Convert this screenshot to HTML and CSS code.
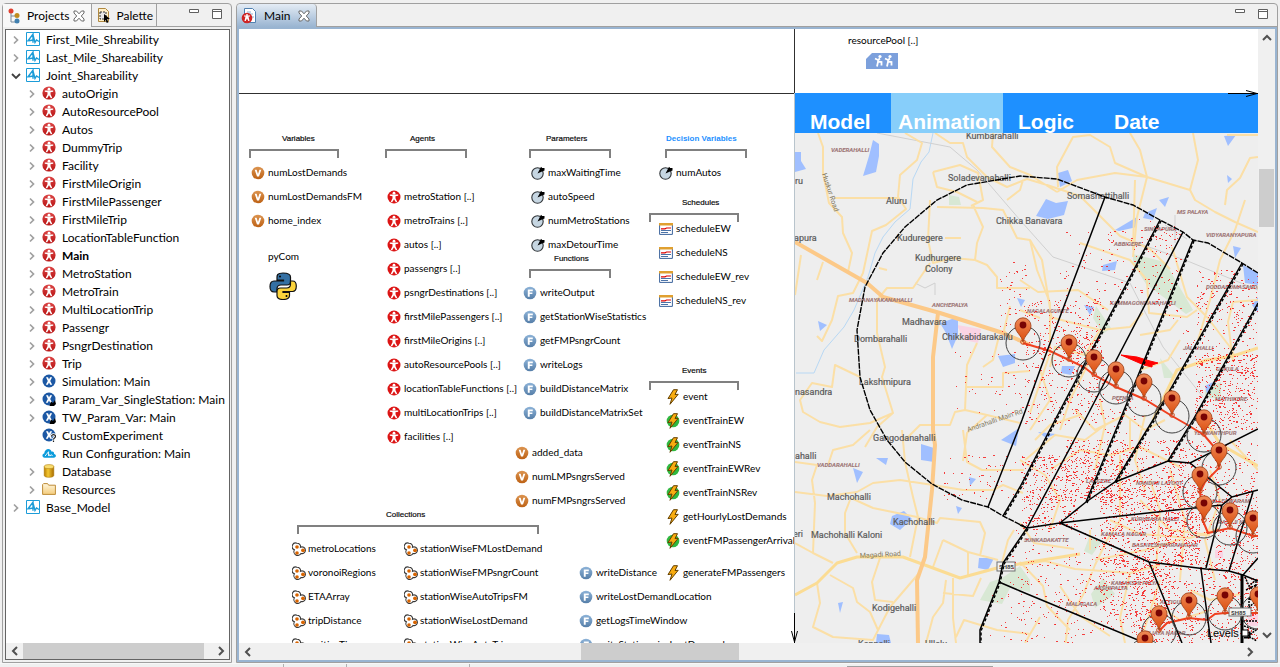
FILE: index.html
```html
<!DOCTYPE html>
<html lang="en">
<head>
<meta charset="utf-8">
<title>Main - Joint_Shareability</title>
<link rel="stylesheet" href="styles.css">
</head>
<body>
<svg class="defs" aria-hidden="true">
  <defs>
    <linearGradient id="pinFill" x1="0" y1="0" x2="0" y2="1"><stop offset="0" stop-color="#ee8a58"/><stop offset="1" stop-color="#dc4c0c"/></linearGradient>
    <linearGradient id="redFill" x1="0" y1="0" x2="0" y2="1"><stop offset="0" stop-color="#dc4646"/><stop offset="1" stop-color="#b81414"/></linearGradient>
    <linearGradient id="varFill" x1="0" y1="0" x2="0" y2="1"><stop offset="0" stop-color="#dc9450"/><stop offset="1" stop-color="#bd6114"/></linearGradient>
    <linearGradient id="fnFill" x1="0" y1="0" x2="0" y2="1"><stop offset="0" stop-color="#8db3d8"/><stop offset="1" stop-color="#557ea8"/></linearGradient>
    <linearGradient id="dbFill"><stop offset="0" stop-color="#b87c00"/><stop offset=".4" stop-color="#f4c832"/><stop offset="1" stop-color="#a86c00"/></linearGradient>
    <linearGradient id="folderFill" x1="0" y1="0" x2="0" y2="1"><stop offset="0" stop-color="#fff6dc"/><stop offset="1" stop-color="#f4cc7c"/></linearGradient>
  </defs>
  <symbol id="man" viewBox="0 0 14 14"><circle cx="7" cy="3.2" r="1.4" fill="#fff"/><path d="M2.8 4.6h8.4v1.2l-2.7.4v2.1l1.7 3.4-1.2.7L7 9.2l-2 3.2-1.2-.7 1.7-3.4V6.2l-2.7-.4z" fill="#fff"/></symbol>
  <symbol id="agent" viewBox="0 0 14 14"><circle cx="7" cy="7" r="6.6" fill="url(#redFill)"/><use href="#man"/></symbol>
  <symbol id="agent2" viewBox="0 0 14 14"><circle cx="7" cy="7" r="6.5" fill="#dc1414"/><use href="#man"/></symbol>
  <symbol id="model" viewBox="0 0 14 14"><path d="M.5.5h13v13H.5z" fill="#fff" stroke="#1c9cd8"/><path d="M1.500 9.500 7 2.200v8.600M3 8.800l4-.8M7 3l2 7.500 1.500-2.500 2.500 1.500" fill="none" stroke="#1c9cd8" stroke-width="1.400"/></symbol>
  <symbol id="exp" viewBox="0 0 14 14"><circle cx="7" cy="7" r="6.500" fill="#1c58a4"/><path d="M4 3.200h2L7 5.400l1.100-2.200h2L8.200 7l2 3.800h-2L7 8.500l-1.200 2.300h-2l2-3.800z" fill="#fff"/></symbol>
  <symbol id="expv" viewBox="0 0 14 14"><use href="#exp"/><path d="m7.500 14 1.500-4.500 2 1.500L13 8l1 4-2 2z" fill="#000"/></symbol>
  <symbol id="expq" viewBox="0 0 14 14"><use href="#exp"/><path d="M9.500 8.500c0-2.500 4-2.500 4 0 0 1.500-2 1.500-2 3M11.500 12.500v1.400" fill="none" stroke="#fff" stroke-width="3"/><path d="M9.500 8.500c0-2.500 4-2.500 4 0 0 1.500-2 1.500-2 3M11.500 12.600v1.400" fill="none" stroke="#222" stroke-width="1.200"/></symbol>
  <symbol id="cloud" viewBox="0 0 16 12"><path d="M3 11.500C0 11.500-.5 7 2.500 6.500 3 1 9.500-.5 11 4.500c2.500-.5 3 1.500 2.800 2.500 3 .5 2.700 4.500-.3 4.500z" fill="#0c9cdc"/><path d="m3.500 9.500 4-5v5m0-2.500 1.700 2.500 1-1.500 2 1" fill="none" stroke="#fff"/></symbol>
  <symbol id="db" viewBox="0 0 14 16"><path d="M1.500 3v10c0 3 11 3 11 0V3z" fill="url(#dbFill)" stroke="#a87400" stroke-width=".6"/><ellipse cx="7" cy="3" rx="5.500" ry="2.300" fill="#f8dc70" stroke="#a87400" stroke-width=".6"/></symbol>
  <symbol id="folder" viewBox="0 0 14 12"><path d="M.6 11.400V1.600l1-1h4l1 1.600h6.800v9.200z" fill="url(#folderFill)" stroke="#bd8c38"/></symbol>
  <symbol id="var" viewBox="0 0 14 14"><circle cx="7" cy="7" r="6.300" fill="url(#varFill)"/><path d="M3.700 3.800h1.900L7 8l1.400-4.200h1.900L8 10.500H6z" fill="#fff"/></symbol>
  <symbol id="fn" viewBox="0 0 14 14"><circle cx="7" cy="7" r="6.300" fill="url(#fnFill)"/><path d="M4.800 3.500h5v1.700H6.700v1.300h2.700v1.600H6.700v2.700H4.800z" fill="#fff"/></symbol>
  <symbol id="param" viewBox="0 0 14 14"><circle cx="6.500" cy="7.500" r="5.700" fill="#c6d6e2" stroke="#303438" stroke-width="1.100"/><path d="M6.500 7.500 9 2.700l1-2L11.200 2h2.300v2.500L11 5.500z" fill="#000"/></symbol>
  <symbol id="sched" viewBox="0 0 14 12"><path d="M.6.600h12.800v10.800H.6z" fill="#fff" stroke="#3c649c"/><path d="M0 0h14v2.500H0z" fill="#e0a030"/><path d="M2 5.800h4l1.500-.8H12" fill="none" stroke="#d00" stroke-width="1.200"/><path d="M2 7.500h10M2 9.500h7" stroke="#4c74a8"/></symbol>
  <symbol id="bolt" viewBox="0 0 14 16"><path d="M7.500.7h4L9 5.500l3.200-.2L4 15.300l2-6.300-4 .6z" fill="#f8ac10" stroke="#644000" stroke-width="1"/></symbol>
  <symbol id="boltg" viewBox="0 0 14 16"><circle cx="7" cy="8" r="6.300" fill="#30b840"/><use href="#bolt"/></symbol>
  <symbol id="coll" viewBox="0 0 16 16"><path d="M5 1.200a3.400 3.400 0 0 1 3.500 4A3.400 3.400 0 1 1 9 11.500 3.700 3.700 0 1 1 2.400 7.800 3.500 3.500 0 0 1 5 1.200z" fill="#fff" stroke="#383838" stroke-width="1.100"/><circle cx="5" cy="5" r="1.800" fill="#d86400"/><circle cx="5" cy="11" r="1.800" fill="#d86400"/><circle cx="11" cy="8.300" r="1.900" fill="#d86400"/></symbol>
  <symbol id="chev" viewBox="0 0 8 10"><path d="m2 1.500 3.500 3.500L2 8.500" fill="none" stroke="#a0a0a0" stroke-width="1.700"/></symbol>
  <symbol id="open" viewBox="0 0 10 10"><path d="m1 3 4 4 4-4" fill="none" stroke="#404040" stroke-width="1.800"/></symbol>
  <symbol id="arrow" viewBox="0 0 10 10"><path d="M7 1 3 5l4 4" fill="none" stroke="#505050" stroke-width="2"/></symbol>
  <symbol id="close" viewBox="0 0 12 12"><path d="M1 1h2.500L6 3.800 8.500 1H11v2L8.300 6 11 9v2H8.500L6 8.200 3.500 11H1V9l2.700-3L1 3z" fill="#fff" stroke="#686868"/></symbol>
  <symbol id="min" viewBox="0 0 12 12"><path d="M1.500 1.500h9v3h-9z" fill="#fff" stroke="#606060"/></symbol>
  <symbol id="max" viewBox="0 0 12 12"><path d="M1.500 1.500h9v9h-9zM1.500 3.500h9" fill="#fff" stroke="#606060"/></symbol>
  <symbol id="pin" viewBox="0 0 18 28"><circle cx="9" cy="25" r="2.300" fill="none" stroke="#c84818"/><path d="M9 25C7.500 18 1 15 1 8.800a8 8 0 0 1 16 0C17 15 10.500 18 9 25z" fill="url(#pinFill)" stroke="#9c3c14" stroke-width=".8"/><circle cx="9" cy="8" r="3.400" fill="#780404"/></symbol>
</svg>

<main class="workbench">
  <section class="panel projects">
    <div class="tabbar">
      <button class="tab current"><svg class="i16" viewBox="0 0 16 16"><path d="M4 4v10h6M4 8h6" fill="none" stroke="#789"/><circle cx="4" cy="3" r="2.500" fill="#e04030"/><circle cx="10" cy="7.500" r="2.500" fill="#c08c20"/><circle cx="10" cy="13" r="2.500" fill="#4080b0"/></svg>Projects<svg class="i12"><use href="#close"/></svg></button>
      <button class="tab"><svg class="i16" viewBox="0 0 16 16"><path d="M2.500 1.500h7l3 3v10h-10z" fill="#fff0c8" stroke="#b08840"/><path d="M4 5h6v7H4z" fill="#e8e8e8" stroke="#333" stroke-dasharray="2 1"/><path d="m8 7 6 5-3 .3 1.500 3-1.800.7-1-3L8 15z"/></svg>Palette</button>
      <span class="tools"><button aria-label="Minimize"><svg class="i12"><use href="#min"/></svg></button><button aria-label="Maximize"><svg class="i12"><use href="#max"/></svg></button></span>
    </div>
    <div class="treebox">
      <ul class="tree">
        <li><svg class="tw"><use href="#chev"/></svg><svg class="ti"><use href="#model"/></svg>First_Mile_Shreability</li>
        <li><svg class="tw"><use href="#chev"/></svg><svg class="ti"><use href="#model"/></svg>Last_Mile_Shareability</li>
        <li><svg class="tw"><use href="#open"/></svg><svg class="ti"><use href="#model"/></svg>Joint_Shareability</li>
        <li class="sub"><svg class="tw"><use href="#chev"/></svg><svg class="ti"><use href="#agent"/></svg>autoOrigin</li>
        <li class="sub"><svg class="tw"><use href="#chev"/></svg><svg class="ti"><use href="#agent"/></svg>AutoResourcePool</li>
        <li class="sub"><svg class="tw"><use href="#chev"/></svg><svg class="ti"><use href="#agent"/></svg>Autos</li>
        <li class="sub"><svg class="tw"><use href="#chev"/></svg><svg class="ti"><use href="#agent"/></svg>DummyTrip</li>
        <li class="sub"><svg class="tw"><use href="#chev"/></svg><svg class="ti"><use href="#agent"/></svg>Facility</li>
        <li class="sub"><svg class="tw"><use href="#chev"/></svg><svg class="ti"><use href="#agent"/></svg>FirstMileOrigin</li>
        <li class="sub"><svg class="tw"><use href="#chev"/></svg><svg class="ti"><use href="#agent"/></svg>FirstMilePassenger</li>
        <li class="sub"><svg class="tw"><use href="#chev"/></svg><svg class="ti"><use href="#agent"/></svg>FirstMileTrip</li>
        <li class="sub"><svg class="tw"><use href="#chev"/></svg><svg class="ti"><use href="#agent"/></svg>LocationTableFunction</li>
        <li class="sub"><svg class="tw"><use href="#chev"/></svg><svg class="ti"><use href="#agent"/></svg><b>Main</b></li>
        <li class="sub"><svg class="tw"><use href="#chev"/></svg><svg class="ti"><use href="#agent"/></svg>MetroStation</li>
        <li class="sub"><svg class="tw"><use href="#chev"/></svg><svg class="ti"><use href="#agent"/></svg>MetroTrain</li>
        <li class="sub"><svg class="tw"><use href="#chev"/></svg><svg class="ti"><use href="#agent"/></svg>MultiLocationTrip</li>
        <li class="sub"><svg class="tw"><use href="#chev"/></svg><svg class="ti"><use href="#agent"/></svg>Passengr</li>
        <li class="sub"><svg class="tw"><use href="#chev"/></svg><svg class="ti"><use href="#agent"/></svg>PsngrDestination</li>
        <li class="sub"><svg class="tw"><use href="#chev"/></svg><svg class="ti"><use href="#agent"/></svg>Trip</li>
        <li class="sub"><svg class="tw"><use href="#chev"/></svg><svg class="ti"><use href="#exp"/></svg>Simulation: Main</li>
        <li class="sub"><svg class="tw"><use href="#chev"/></svg><svg class="ti"><use href="#expv"/></svg>Param_Var_SingleStation: Main</li>
        <li class="sub"><svg class="tw"><use href="#chev"/></svg><svg class="ti"><use href="#expv"/></svg>TW_Param_Var: Main</li>
        <li class="sub"><svg class="tw"></svg><svg class="ti"><use href="#expq"/></svg>CustomExperiment</li>
        <li class="sub"><svg class="tw"></svg><svg class="ti"><use href="#cloud"/></svg>Run Configuration: Main</li>
        <li class="sub"><svg class="tw"><use href="#chev"/></svg><svg class="ti"><use href="#db"/></svg>Database</li>
        <li class="sub"><svg class="tw"><use href="#chev"/></svg><svg class="ti"><use href="#folder"/></svg>Resources</li>
        <li><svg class="tw"><use href="#chev"/></svg><svg class="ti"><use href="#model"/></svg>Base_Model</li>
      </ul>
      <div class="hscroll"><button aria-label="Scroll left"><svg class="i10"><use href="#arrow"/></svg></button><span class="track"><span class="thumb tree-thumb"></span></span><button aria-label="Scroll right"><svg class="i10 right"><use href="#arrow"/></svg></button></div>
    </div>
  </section>

  <section class="panel editor">
    <div class="tabbar">
      <button class="tab current"><svg class="i16" viewBox="0 0 16 16"><path d="M3.500.500h8l3 3v11h-11z" fill="#fff" stroke="#5080b0"/><path d="M6 4h4M6 6h6M10 9h3" stroke="#90b0d0"/><circle cx="6" cy="10" r="5.300" fill="#d02424"/><path d="M5.300 6h1.400v1.500H9v1H7.500L8.500 13H7.300L6 10.500 4.700 13H3.500l1-4.500H3v-1h2.300z" fill="#fff"/></svg>Main<svg class="i12"><use href="#close"/></svg></button>
      <span class="tools"><button aria-label="Minimize"><svg class="i12"><use href="#min"/></svg></button><button aria-label="Maximize"><svg class="i12"><use href="#max"/></svg></button></span>
    </div>
    <div class="viewport">
      <div class="canvas">
        <div class="axis-x"></div>
        <div class="axis-y"></div>

        <h3 class="head h-vars">Variables</h3>
        <ul class="nodes g-vars">
          <li><svg><use href="#var"/></svg>numLostDemands</li>
          <li><svg><use href="#var"/></svg>numLostDemandsFM</li>
          <li><svg><use href="#var"/></svg>home_index</li>
        </ul>
        <div class="pycom">pyCom<svg viewBox="0 0 28 28"><path d="M14 1C8 1 8 3.500 8 5v3h6.500v1H5C2 9 1 11.500 1 14.500S2.500 20 5 20h3v-3c0-2.500 1.500-4 4-4h6c2 0 3.500-1.500 3.500-3.500V5c0-2.500-2.500-4-7.500-4z" fill="#3470a4" stroke="#111" stroke-width="1.200"/><path d="M14 27.500c6 0 6.500-2.500 6.500-4v-3H14v-1h9.500c3 0 3.800-2.500 3.800-5.500s-1.500-5-3.800-5h-2v3c0 2.500-1.500 4-4 4h-6c-2 0-3.500 1.500-3.500 3.500v4c0 2.500 2 4 6 4z" fill="#fcd43c" stroke="#111" stroke-width="1.200"/><circle cx="11" cy="4.500" r="1"/><circle cx="17.500" cy="24" r="1"/></svg></div>

        <h3 class="head h-agents">Agents</h3>
        <ul class="nodes g-agents">
          <li><svg><use href="#agent2"/></svg>metroStation [..]</li>
          <li><svg><use href="#agent2"/></svg>metroTrains [..]</li>
          <li><svg><use href="#agent2"/></svg>autos [..]</li>
          <li><svg><use href="#agent2"/></svg>passengrs [..]</li>
          <li><svg><use href="#agent2"/></svg>psngrDestinations [..]</li>
          <li><svg><use href="#agent2"/></svg>firstMilePassengers [..]</li>
          <li><svg><use href="#agent2"/></svg>firstMileOrigins [..]</li>
          <li><svg><use href="#agent2"/></svg>autoResourcePools [..]</li>
          <li><svg><use href="#agent2"/></svg>locationTableFunctions [..]</li>
          <li><svg><use href="#agent2"/></svg>multiLocationTrips [..]</li>
          <li><svg><use href="#agent2"/></svg>facilities [..]</li>
        </ul>

        <h3 class="head h-params">Parameters</h3>
        <ul class="nodes g-params">
          <li><svg><use href="#param"/></svg>maxWaitingTime</li>
          <li><svg><use href="#param"/></svg>autoSpeed</li>
          <li><svg><use href="#param"/></svg>numMetroStations</li>
          <li><svg><use href="#param"/></svg>maxDetourTime</li>
        </ul>
        <h3 class="head h-fns">Functions</h3>
        <ul class="nodes g-fns">
          <li><svg><use href="#fn"/></svg>writeOutput</li>
          <li><svg><use href="#fn"/></svg>getStationWiseStatistics</li>
          <li><svg><use href="#fn"/></svg>getFMPsngrCount</li>
          <li><svg><use href="#fn"/></svg>writeLogs</li>
          <li><svg><use href="#fn"/></svg>buildDistanceMatrix</li>
          <li><svg><use href="#fn"/></svg>buildDistanceMatrixSet</li>
        </ul>
        <ul class="nodes g-data">
          <li><svg><use href="#var"/></svg>added_data</li>
          <li><svg><use href="#var"/></svg>numLMPsngrsServed</li>
          <li><svg><use href="#var"/></svg>numFMPsngrsServed</li>
        </ul>

        <h3 class="head decision h-dec">Decision Variables</h3>
        <ul class="nodes g-dec"><li><svg><use href="#param"/></svg>numAutos</li></ul>
        <h3 class="head h-sched">Schedules</h3>
        <ul class="nodes g-sched">
          <li><svg><use href="#sched"/></svg>scheduleEW</li>
          <li><svg><use href="#sched"/></svg>scheduleNS</li>
          <li><svg><use href="#sched"/></svg>scheduleEW_rev</li>
          <li><svg><use href="#sched"/></svg>scheduleNS_rev</li>
        </ul>
        <h3 class="head h-events">Events</h3>
        <ul class="nodes tall g-events">
          <li><svg><use href="#bolt"/></svg>event</li>
          <li><svg><use href="#boltg"/></svg>eventTrainEW</li>
          <li><svg><use href="#boltg"/></svg>eventTrainNS</li>
          <li><svg><use href="#boltg"/></svg>eventTrainEWRev</li>
          <li><svg><use href="#boltg"/></svg>eventTrainNSRev</li>
          <li><svg><use href="#bolt"/></svg>getHourlyLostDemands</li>
          <li><svg><use href="#boltg"/></svg>eventFMPassengerArrival</li>
        </ul>
        <ul class="nodes tall g-gen"><li><svg><use href="#bolt"/></svg>generateFMPassengers</li></ul>

        <h3 class="head h-coll">Collections</h3>
        <ul class="nodes wide g-coll1">
          <li><svg><use href="#coll"/></svg>metroLocations</li>
          <li><svg><use href="#coll"/></svg>voronoiRegions</li>
          <li><svg><use href="#coll"/></svg>ETAArray</li>
          <li><svg><use href="#coll"/></svg>tripDistance</li>
          <li><svg><use href="#coll"/></svg>waitingTime</li>
        </ul>
        <ul class="nodes wide g-coll2">
          <li><svg><use href="#coll"/></svg>stationWiseFMLostDemand</li>
          <li><svg><use href="#coll"/></svg>stationWiseFMPsngrCount</li>
          <li><svg><use href="#coll"/></svg>stationWiseAutoTripsFM</li>
          <li><svg><use href="#coll"/></svg>stationWiseLostDemand</li>
          <li><svg><use href="#coll"/></svg>stationWiseAutoTrips</li>
        </ul>
        <ul class="nodes g-fns2">
          <li><svg><use href="#fn"/></svg>writeDistance</li>
          <li><svg><use href="#fn"/></svg>writeLostDemandLocation</li>
          <li><svg><use href="#fn"/></svg>getLogsTimeWindow</li>
          <li><svg><use href="#fn"/></svg>writeStationwiseLostDemand</li>
        </ul>

        <div class="pool">resourcePool [..]<svg viewBox="0 0 32 16"><path d="M6 0h26v16H0V6z" fill="#7ca0dc"/><g fill="none" stroke="#fff" stroke-width="1.800"><path d="M9 5.500 12 7l2-1.500M12 6v3l-1 4.500M12 8.500l3.500.5v3.500M19 5.500 22 7l2-1.500M22 6v3l-1 4.500M22 8.500l3.500.5v3.500"/></g><circle cx="14" cy="3.500" r="1.600" fill="#fff"/><circle cx="24" cy="3.500" r="1.600" fill="#fff"/></svg></div>

        <div class="sim">
          <nav class="simnav"><button>Model</button><button class="on">Animation</button><button>Logic</button><button>Date</button></nav>
          <svg class="map" viewBox="795 133 463 510" preserveAspectRatio="xMinYMin slice">
            <g class="green"><path d="M1133 254l32 8 28 48-7 4-40-30-13-20zM1096 306l15 22-8 6-10-16zM1020 566l10 14v12l-20-4-8 16-22-4 10-18 12-4zM1090 535l12 6-10 14-8-4zM1103 578l12 16-20 14-4-14zM1160 358l16 20h-12zM949 195l10 2 2 8h-12zM1205 390l16-8v16h-16z"/></g>
            <g class="pink"><path d="M957 325l24 4-3 14-14-3zM1215 550h8v8h-8zM1248 612h10v14h-10z"/></g>
            <g class="water"><path d="M795 152h6v9l5 8-11 3zM873 140l6 4v12l-3 16-13 4 6-20zM1068 170l4 11-12 6-2-14zM1036 216l10-17 10 4 12-2-4 14-16 4zM1115 230l22-13v10l-18 4zM1145 213l12-5-4 12-10-2zM1159 200l10-3-4 10zM1103 265l14-4-2 9-13 1zM940 323l18-6v18l-6 14-6-16zM818 321l9 4-7 6zM1017 298l8 2-4 7zM998 356l17-2v9l-12 4zM1224 136l12-1-8 11zM1243 265l15 8v12l-13-2zM1233 246l8 2-6 10zM1252 305l6-8v16zM1084 305l10 2-4 8zM921 444l13 4v14l-13-2zM853 468l10 4-6 11zM876 458h12l-2 7zM892 516l12-5 8 8-12 11-10-6zM979 558h15l-6 12-10-2zM877 634l12 1 2 8h-15zM838 603l5-1-3 11zM969 477l7 2-6 7zM1001 440l18-12-3 18zM1038 432l18 2-10 4zM1062 366h13l-4 9-10-2zM956 506l6 2-4 6zM1227 175l5 4-4 4zM1205 386l8-4-6 12z"/></g>
            <path class="stream" d="M933 133l-4 19-8 10-8 17-3 30-15 13-12 15-8 16-7 24-14 33-10 17-20 23-10 23-18 0"/>
            <g class="rail"><path d="M877 133l73 14 27 23 43 50 33 37 77 26 33 64 40 50M1130 240l60 22 68 28M1175 215v28M1165 225l22 14M915 283l10 5 10-5v12M812 657l26-10"/></g>
            <g class="road">
              <path d="M818 133l5 14v26l6 30 13 14 1 16 9 20-4 19M835 198h63M905 133l17 10-5 17-17 15-2 22 8 12-20 16-14 6-9 42-10 20-15 3-6 24-10 21-5-5M935 133l15 10h13l4 14 20 20 20 10 20-8 20 6 33 11 40 40 30 13 20 20M933 172l27-7 18 8 5 27-12 6M933 172l4 15 20 5 20 10M993 133l-1 14 18 20 20 8 27 17M1058 187l-1-20 16-30 17-2 20 12 5 16 32 14 43 13 5 10 20 12 20 10 23 10M1130 133l10 17 7 27-10 40-4 40M1193 133l5 27-8 30M1227 135h31M1258 157l-8 1-10 20-13 12-2 15M1057 192l20-12 38-7 32 4M1023 180l-3 10-13 10"/>
              <path d="M973 205l10 22-6 16-2 17 12 5 10 12v11l33 0M930 200l-2 40 5 23 20-5 22 2M937 207l46 1 20 2 14 28 13 2 12 20 10 60M930 263l-17 25h-26l-10 12v33l8 34-3 10 11 36-16 14-12 20M860 377l-25-12-3 22-20-4-12 17 3 12 17 10 20 5 30-4 23-10M823 262l-6 18M795 295l6-40M945 238h16M879 268l8 2M977 343l-10 22-2 45 22 5 33 8M965 387l38 0v-14l27-2M983 367l10-7 6-24M905 440l15-15h30l5-13 10-2M1010 340l-6-10 6-24M987 415l-20 18-4 28"/>
              <path d="M870 430l-17 15-20 5-5 15M795 462l22 3-5 15 3 23-2 50 20 10M795 492l32 4 30-4 16-9 27-3 33 5 30 5h30l10-5 20 8M902 430l3 32 8 35 5 20-8 40M850 500l-5 13v20l12 20M851 498l22 10 44 9 20 6 3-5 40 4 5 11-5 23M795 543l18 10M817 583l3 20-7 24 20 10 40 3 17-33 30-35M830 575l23 13 4 14 13 10 8 18M880 558l-8 24 3 18 18 2M943 540l-10 27M943 540l25 12 30 8M968 552v24M953 578v40l3 25M946 580l-3 23-10 14-7 26M943 593l30 3 8-18M956 637l8-17 33 10 33 4M963 430l4 32 15 8h42M1000 570l8-30 6-10M1035 440l15-15 30-10M1025 460l30-25 30 5 20-15"/>
              <path d="M1030 240l7 30 13 33v50l-20 60M1020 280l18 12 40-2 30 20M1080 243l50 17 17 20 2 33 38 4 10-7M1133 250l2-70M1172 247l15 50 20 20 23 30 5 10M1050 317l50 13 30-3 13-14M1020 310l20 8M1100 330l-15 25-30-8-5 20M1245 200l-10 30-15 30-10 40-12 40M1258 300l-25 2-5 20 5 40M1040 370l10 30-20 30M1140 335l30-5 8-10M1090 360l-20 40-10 30M1180 340l-12 20-28 10M1075 410l20 20 30-15 20 15 20-10M1100 400l5 25-10 45M1130 420v30M1145 415l-10 45 10 30M1020 460l25 15 15 25-10 30M1050 470l30-20 30 5 30-8 40 20M1120 455v65l-13 20-12 25-12 30-15 25-3 30M1020 565l25-4 30 8 55 4 30-8M1020 562l23 24 4 20 23 24M1110 520l30 14 50 4 30-10M1140 500l30 30 40 5M1150 480l10 30-4 60M1170 470l15 50-5 60M1130 573l-10 45 5 25M1160 580l-20 63M1040 617l-15 26M1060 586l20 30 30 20M1190 590l20 10 30-6M1210 470l10 30-15 40 10 40M1230 440l28 30M1020 523l14 20 40 6M1090 530v20M1095 560l50-10 40-12M1150 600l30 20 30-10"/>
            </g>
            <g class="mainroad"><path d="M795 595l22-12 20-20 20-6h46l30 11 27 10 37-10 33-6 50-8M1153 420l24-50 30-10 26-4 25-8M1200 412l20 32 38 22"/></g>
            <g class="highway"><path d="M795 242l72 41 16 14 57 16 63 20 27 12M938 313l-5 44v73l2 15-3 45-7 67-8 23 1 63"/></g>
            <g class="lbl">
              <text x="966" y="139">Kumbarahalli</text><text x="948" y="181">Soladevanahalli</text><text x="1067" y="199">Somashettihalli</text><text x="886" y="204">Aluru</text><text x="795" y="184">ru</text><text x="794" y="241">apura</text><text x="996" y="224">Chikka Banavara</text><text x="897" y="241">Kuduregere</text><text x="915" y="261">Kudhurgere</text><text x="925" y="272">Colony</text><text x="902" y="325">Madhavara</text><text x="942" y="340">Chikkabidarakallu</text><text x="854" y="342">Dombarahalli</text><text x="859" y="385">Lakshmipura</text><text x="795" y="395">nasandra</text><text x="873" y="441">Gangodanahalli</text><text x="795" y="459">ahalli</text><text x="827" y="500">Machohalli</text><text x="893" y="525">Kachohalli</text><text x="811" y="538">Machohalli Kaloni</text><text x="793" y="537">eri</text><text x="872" y="611">Kodigehalli</text><text x="858" y="647">Kannalli</text><text x="925" y="647">Ullalu</text>
            </g>
            <g class="small">
              <text x="831" y="152">VADERAHALLI</text><text x="849" y="302">MADANAYAKANAHALLI</text><text x="932" y="307">ANCHEPALYA</text><text x="817" y="467">VADDARAHALLI</text><text x="1177" y="214">MS PALAYA</text><text x="1144" y="231">SINGAPURA</text><text x="1114" y="246">ABBIGERE</text><text x="1206" y="237">VIDYARANYAPURA</text><text x="1206" y="289">DODDABOMASANDRA</text><text x="1110" y="305">KAMMAGONDANAHALLI</text><text x="1027" y="313">NAGALAGUNTE</text><text x="1183" y="350">JALAHALLI</text><text x="1216" y="371">GOKULA</text><text x="1112" y="400">PEENYA</text><text x="1215" y="401">MATHIKERE</text><text x="1194" y="435">YESWANTHPUR</text><text x="1086" y="483">LAGGERE</text><text x="1136" y="485">NANDINI LAYOUT</text><text x="1206" y="503">MALLESWARAM</text><text x="1131" y="521">KURUBARA HALLI</text><text x="1101" y="536">KAMALA NAGAR</text><text x="1132" y="547">BASAVESHWARANAGAR</text><text x="1024" y="542">SUNKADAKATTE</text><text x="1111" y="585">KAMAKSHI PALYA</text><text x="1094" y="590">AKSHIPALYA</text><text x="1066" y="606">MALAGALA</text><text x="1160" y="604">ATTIGUPPE</text><text x="1145" y="635">VIJAYA NAGAR</text><text x="1218" y="524">RAJAJI NAGAR</text>
            </g>
            <text class="roadname" transform="translate(860 558) rotate(-3)">Magadi Road</text>
            <text class="roadname" transform="translate(968 432) rotate(-19)">Andrahalli Main Rd</text>
            <text class="roadname" transform="translate(822 174) rotate(72)">Huskur Road</text>
            <rect x="997" y="562" width="18" height="9" class="shield"/><text x="999" y="569" class="shieldtext">SH85</text>
            <path id="trips" class="trips"/>
            <path class="burst" d="M1121 355l16 2 13 4 8 2-6 2v2l-8-2z"/>
            <path class="route" d="M1023 343l27 8 19 9 15 7 10 8 22 12 28 12 28 17 14 8 18 11 11 13 4 20-14 14-5 10 1 9 2 20 5 12 22-5 23 8h10M1159 631l8-8 22-5 18 2 8-6 10-1 33 0"/>
            <g class="voronoi">
              <path class="hull outer" d="M1258 273l-16-10-34-20-15-3-10-8-23-12-27-15-28-8-48-18-37-3-53 9-30 15-32 27-22 26-18 34-8 43 3 47 10 33 17 30 18 22 27 22 30 16 26 7 15 9 24 12"/>
              <path class="hull" d="M1161 221l-105 200-35 67-17 29M1243 264l-89 157-38 62M1259 304l-65 117-25 41M1194 241l-73 180-34 82M1028 529l-24 35-4 19-19 48v13"/>
              <path d="M1105 197l-65 173-18 50-34 87M1160 220l-105 200-35 67-17 29M1183 232l-98 188-58 108M1193 240l-73 180-34 82M1242 263l-89 157-38 62M1258 303l-65 117-25 41M1060 523l26-21 29-20 53-21 22 2 68-34M1190 463l42 34 26-7M1020 525l7 3 33-5 60-7 102-11 10-8M1222 505l-16 63M1253 492l-24 79M1060 523l89 39 57 7 23 2 14 4 15 6M1149 562l33 81M1201 569l10 74M1243 575l15-17M1027 528l-24 35-4 19-19 48v13M999 582l21 9 125 52"/>
              <path class="heavy" d="M1242 575v68"/>
              <path d="M1245 577l4 9 8-7M1246 590l10-5-7 14 7 2-9 8M1249 598v15M1243 621h15M1244 626l12 4-8 6 9 5M1256 581v12l-6-6" stroke-dasharray="2 1"/>
            </g>
            <g id="stations" class="stations"></g>
            <rect x="1229" y="608" width="22" height="8" class="shield"/><text x="1231" y="615" class="shieldtext">SH85</text>
            <text x="1207" y="637" class="levels">Levels</text>
            <path d="M1242 630h6v6h-6z" fill="#fff" stroke="#000"/><path d="M1244 637.500h5.500v-6" fill="none" stroke="#000" stroke-width="2"/>
          </svg>
        </div>
        <svg class="tip tip-x" viewBox="0 0 30 8"><path d="M0 4.500h30M18 1.500l11 3-11 3" fill="none" stroke="#000"/></svg>
        <svg class="tip tip-y" viewBox="0 0 8 30"><path d="M4.500 0v30M1.500 18l3 11 3-11" fill="none" stroke="#000"/></svg>
      </div>
      <div class="vscroll"><button aria-label="Scroll up"><svg class="i10 up"><use href="#arrow"/></svg></button><span class="vtrack"><span class="vthumb"></span></span><button aria-label="Scroll down"><svg class="i10 down"><use href="#arrow"/></svg></button></div>
      <div class="hscroll"><button aria-label="Scroll left"><svg class="i10"><use href="#arrow"/></svg></button><span class="track"><span class="thumb canvas-thumb"></span></span><button aria-label="Scroll right"><svg class="i10 right"><use href="#arrow"/></svg></button></div>
    </div>
  </section>
</main>
<footer class="status"><span></span><span></span><span></span><span></span></footer>
<script src="script.js"></script>
</body>
</html>
```

FILE: styles.css
```css
* { box-sizing: border-box; }
body { margin: 0; height: 100vh; display: flex; flex-direction: column; background: #f0f0f0; color: #000; font-family: Lato, "Open Sans", sans-serif; font-size: 12px; overflow: hidden; }
button { border: 0; background: none; padding: 0; margin: 0; font: inherit; color: inherit; }
ul, h3 { margin: 0; padding: 0; list-style: none; }
svg { display: block; flex: none; }
.defs { position: absolute; width: 0; height: 0; }
.i16 { width: 16px; height: 16px; }
.i12 { width: 12px; height: 12px; }
.i10 { width: 10px; height: 10px; }
.right { transform: rotate(180deg); }
.up { transform: rotate(90deg); }
.down { transform: rotate(-90deg); }

.workbench { flex: 1; min-height: 0; display: flex; gap: 4px; padding: 3px 2px 0 2px; }
.panel { display: flex; flex-direction: column; border: 1px solid #a0a0a0; border-radius: 4px 4px 0 0; min-width: 0; }
.projects { width: 230px; flex: none; }
.editor { flex: 1; }
.tabbar { display: flex; height: 23px; border-bottom: 1px solid #a0a0a0; flex: none; }
.tab { display: flex; align-items: center; gap: 6px; padding: 0 6px 0 4px; border-right: 1px solid #a0a0a0; height: 22px; white-space: nowrap; }
.projects .tab { gap: 4px; padding: 0 3px 0 4px; }
.projects .current { height: 23px; background: #f8f8f8; padding-right: 6px; }
.editor .current { height: 23px; background: linear-gradient(#e4ecf5, #99b4d1); border-radius: 4px 4px 0 0; gap: 7px; }
.tools { margin-left: auto; display: flex; gap: 11px; padding: 4px 8px 0 0; align-items: flex-start; }
.treebox { flex: 1; min-height: 0; display: flex; flex-direction: column; margin: 2px 1px 2px 2px; border: 1px solid #646464; background: #fff; }
.tree { flex: 1; min-height: 0; overflow: hidden; }
.tree li { display: flex; align-items: center; height: 18px; padding-left: 5px; white-space: nowrap; }
.tree .sub { padding-left: 21px; }
.tw { width: 10px; height: 10px; margin: 2px 5px 0 0; }
.ti { width: 14px; height: 14px; margin-right: 6px; }

.hscroll { display: flex; height: 16px; background: #f0f0f0; flex: none; }
.hscroll button { width: 17px; display: flex; align-items: center; justify-content: center; }
.track { flex: 1; display: flex; }
.thumb { background: #cdcdcd; }
.tree-thumb { width: 96%; }
.canvas-thumb { width: 16%; margin-left: 33%; }
.viewport { flex: 1; min-height: 0; display: grid; grid-template-columns: 1fr 17px; grid-template-rows: 1fr 17px; border: 2px solid #99b4d1; background: #f0f0f0; }
.viewport .hscroll { grid-column: 1 / 2; height: 17px; }
.vscroll { display: flex; flex-direction: column; background: #f0f0f0; }
.vscroll button { height: 17px; display: flex; align-items: center; justify-content: center; }
.vtrack { flex: 1; display: flex; flex-direction: column; }
.vthumb { height: 10%; margin: 123px 1px 0; background: #cdcdcd; }

/* Free canvas of the model editor: every element sits at its model position. */
.canvas { position: relative; overflow: hidden; background: #fff; font-size: 10px; min-width: 0; }
.axis-x { position: absolute; left: 0; right: 0; top: 64px; border-top: 1px solid #303030; }
.axis-y { position: absolute; left: 555px; top: 0; height: 64px; border-left: 1px solid #303030; }
.head { position: absolute; top: 105px; width: 80px; font: 8px/10px "Liberation Sans", sans-serif; white-space: nowrap; -webkit-text-stroke: 0.2px #222; }
.head::after { content: ""; display: block; box-sizing: border-box; height: 9px; margin-top: 5px; border: solid #808080; border-width: 2px 2px 0; margin-left: calc(-1 * var(--in, 0px)); width: var(--w, 82px); }
.decision { color: #1e90ff; font-weight: bold; -webkit-text-stroke: 0; }
.h-vars { --in: 33px; --w: 90px; left: 43px; }
.h-agents { --in: 25px; left: 171px; }
.h-params { --in: 17px; left: 307px; }
.h-dec { --in: 1px; left: 427px; }
.h-fns { --in: 25px; left: 315px; top: 225px; }
.h-sched { --in: 33px; --w: 90px; left: 443px; top: 169px; }
.h-events { --in: 33px; --w: 90px; left: 443px; top: 337px; }
.h-coll { --in: 89px; --w: 242px; left: 147px; top: 481px; }
.nodes { position: absolute; }
.nodes li { display: flex; align-items: center; gap: 3px; height: 24px; white-space: nowrap; }
.nodes svg { width: 14px; height: 14px; margin-top: 2px; }
.nodes.tall svg { height: 16px; width: 14px; }
.nodes.wide li { gap: 0; }
.nodes.wide svg { width: 16px; height: 16px; margin-top: 4px; }
.g-vars { left: 12px; top: 131px; }
.g-agents { left: 148px; top: 155px; }
.g-params { left: 292px; top: 131px; }
.g-fns { left: 284px; top: 251px; }
.g-data { left: 276px; top: 411px; }
.g-dec { left: 420px; top: 131px; }
.g-sched { left: 420px; top: 187px; }
.g-events { left: 427px; top: 355px; }
.g-gen { left: 427px; top: 531px; }
.g-coll1 { left: 53px; top: 507px; }
.g-coll2 { left: 165px; top: 507px; }
.g-fns2 { left: 340px; top: 531px; }
.pycom { position: absolute; left: 29px; top: 220px; line-height: 14px; }
.pycom svg { width: 28px; height: 28px; margin: 9px 0 0 1px; }
.pool { position: absolute; left: 609px; top: 4px; line-height: 14px; white-space: nowrap; }
.pool svg { width: 32px; height: 16px; margin: 6px 0 0 18px; }

.sim { position: absolute; left: 555px; right: 0; top: 64px; bottom: 0; display: flex; flex-direction: column; border-left: 1px solid #b8c4cc; }
.simnav { display: flex; height: 40px; flex: none; background: #1e90ff; color: #fff; font: bold 21px/24px "Liberation Sans", sans-serif; position: relative; }
.simnav button { width: 96px; padding: 17px 0 0 15px; text-align: left; }
.simnav .on { width: 112px; padding-left: 7px; background: #87cefa; }
.map { flex: 1; width: 100%; min-height: 0; background: #eee; }
.tip { position: absolute; }
.tip-x { right: 0; top: 60px; width: 30px; height: 8px; }
.tip-y { left: 551px; bottom: 0; width: 8px; height: 30px; }

.water { fill: #a0bfff; }
.green { fill: #d8e8d4; }
.pink { fill: #fad4e4; }
.stream { fill: none; stroke: #b8d8f4; }
.rail { fill: none; stroke: #d0d0d0; }
.road { fill: none; stroke: #fbdfa6; stroke-width: 2; stroke-linejoin: round; }
.mainroad { fill: none; stroke: #fbdc94; stroke-width: 3; stroke-linejoin: round; }
.highway { fill: none; stroke: #fcc988; stroke-width: 4; stroke-linejoin: round; }
.lbl { font: 9px Roboto, sans-serif; fill: #5c5c5c; stroke: #5c5c5c; stroke-width: 0.2; }
.small { font: italic bold 6px Roboto, sans-serif; fill: #a07878; stroke: #a07878; stroke-width: 0.1; }
.roadname { font: 7px Roboto, sans-serif; fill: #80765c; }
.shield { fill: #f4f4f4; stroke: #707070; }
.shieldtext { font: bold 6px Roboto, sans-serif; fill: #444; }
.trips { fill: none; stroke: #f42020; stroke-width: 1; opacity: 0.85; }
.burst { fill: #f00; stroke: #f00; }
.route { fill: none; stroke: #f04020; stroke-width: 2; }
.voronoi { fill: none; stroke: #000; stroke-width: 1.5; }
.hull { stroke-width: 1.5; stroke-dasharray: 3 2; }
.outer { stroke-width: 1.4; stroke-dasharray: 6 1; }
.heavy { stroke-width: 3; }
.stations circle { stroke: #404040; fill: none; }
.levels { font: 11px "Liberation Sans", sans-serif; fill: #000; }

.status { height: 4px; flex: none; display: flex; border-top: 1px solid #f8f8f8; }
.status span { border-right: 1px solid #b0b0b0; width: 123px; }
.status span:first-child { width: 284px; }
.status span:nth-child(2) { width: 63px; }
.status span:last-child { width: 146px; margin-left: 377px; border: 0; border-bottom: 1px solid #a0a0a0; }
```

FILE: script.js
```js
// Stations of the metro line, as map coordinates of the pin tips.
const stations = [[1023,343],[1069,360],[1094,375],[1116,387],[1144,399],[1172,416],[1204,435],[1219,468],[1200,492],[1204,521],[1230,528],[1253,536],[1145,656],[1159,631],[1189,618],[1225,613],[1258,612]];
const group = document.getElementById('stations');
group.innerHTML = stations.map(([x, y]) => `<circle cx="${x}" cy="${y}" r="17"/>`).join('') +
  stations.map(([x, y]) => `<use href="#pin" x="${x - 9}" y="${y - 26}" width="18" height="28"/>`).join('');

// Trip requests: [x, y, width, height, count] per district.
const districts = [
  [1000,262,28,70,45],[1026,300,75,55,230],[955,350,70,65,40],[1025,350,80,75,230],[1060,230,60,80,60],
  [1120,215,40,80,50],[1152,225,30,95,70],[1195,270,63,60,150],[1180,330,78,30,50],[1195,355,63,75,430],
  [1105,400,60,35,35],[940,455,85,45,65],[1022,455,55,75,330],[1065,440,80,60,450],[1010,525,90,60,90],
  [1020,580,80,63,110],[985,590,40,50,20],[1100,490,100,75,700],[1145,440,60,80,220],[1165,440,93,130,380],
  [1100,560,70,70,350],[1130,560,115,83,450],[1215,480,43,100,170],[1245,580,13,60,80],[1062,335,40,25,60]
];
let seed = 7;
const rnd = () => (seed = (seed * 16807) % 2147483647) / 2147483647;
let d = '';
for (const [x, y, w, h, n] of districts) {
  for (let i = 0; i < n; i++) {
    d += `M${Math.floor(x + rnd() * w)} ${Math.floor(y + rnd() * h)}.5h${rnd() > 0.75 ? 2 : 1}`;
  }
}
document.getElementById('trips').setAttribute('d', d);
```
